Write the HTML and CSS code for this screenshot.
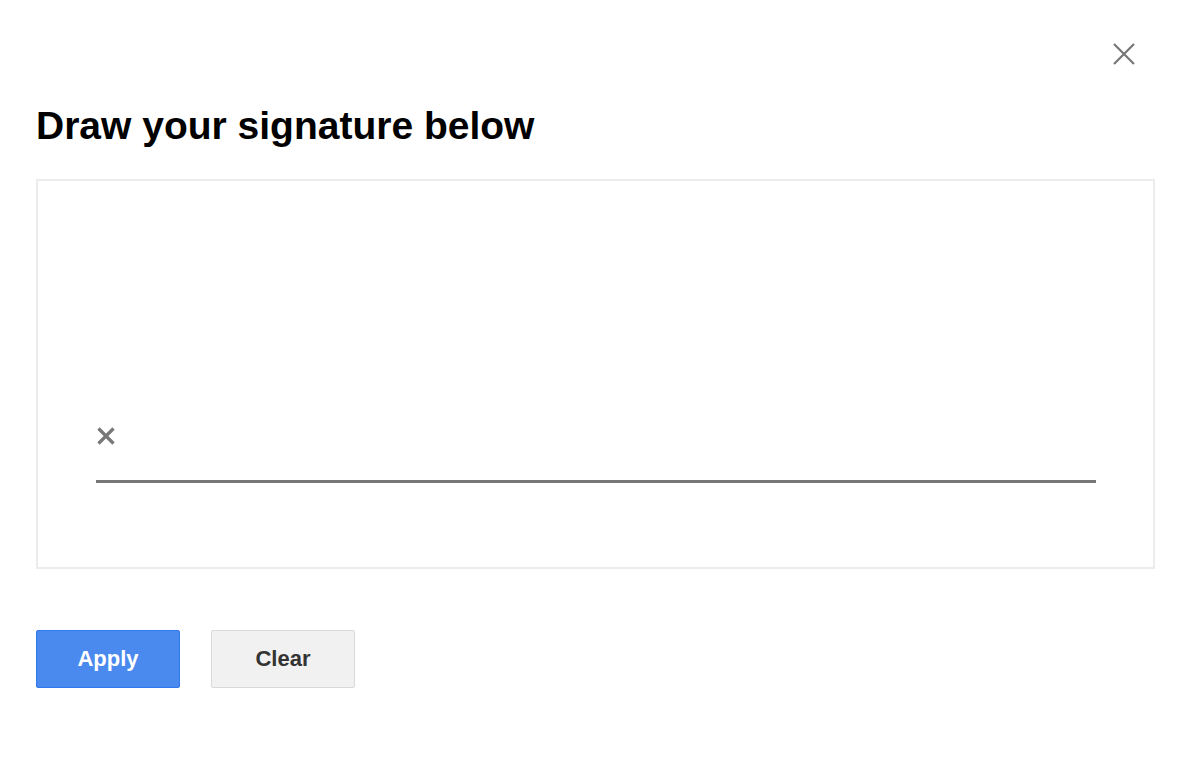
FILE: index.html
```html
<!DOCTYPE html>
<html>
<head>
<meta charset="utf-8">
<link rel="stylesheet" href="styles.css">
</head>
<body>
<div class="dialog">
  <div class="top">
    <button class="close" aria-label="Close">
      <svg width="24" height="24" viewBox="0 0 24 24"><path d="M2 2 L22 22 M22 2 L2 22" stroke="#777" stroke-width="2.2" fill="none"/></svg>
    </button>
  </div>
  <h1 class="title">Draw your signature below</h1>
  <div class="pad">
    <svg class="mark" width="20" height="20" viewBox="0 0 20 20"><path d="M2.5 2.5 L17.5 17.5 M17.5 2.5 L2.5 17.5" stroke="#777" stroke-width="3.2" fill="none"/></svg>
    <div class="line"></div>
  </div>
  <div class="actions">
    <button class="btn apply">Apply</button>
    <button class="btn clear">Clear</button>
  </div>
</div>
</body>
</html>
```

FILE: styles.css
```css
* { box-sizing: border-box; }
html, body { margin: 0; padding: 0; background: #fff; }
body { font-family: "Liberation Sans", Arial, sans-serif; }
.dialog {
  width: 1198px;
  height: 770px;
  padding: 42px 43px 0 36px;
  display: flex;
  flex-direction: column;
}
.top {
  display: flex;
  justify-content: flex-end;
  height: 24px;
  margin-right: 19px;
}
.close {
  border: 0;
  background: none;
  padding: 0;
  width: 24px;
  height: 24px;
  cursor: pointer;
}
.close svg { display: block; }
.title {
  margin: 40px 0 0 0;
  font-size: 39px;
  line-height: 39px;
  font-weight: bold;
  color: #000;
}
.pad {
  margin-top: 34px;
  height: 390px;
  border: 2px solid #ececec;
  padding: 245px 0 0 58px;
  display: flex;
  flex-direction: column;
}
.mark { display: block; margin-left: 0; }
.line {
  margin-top: 34px;
  width: 1000px;
  height: 3px;
  background: #777;
}
.actions {
  margin-top: 61px;
  display: flex;
  gap: 31px;
}
.btn {
  width: 144px;
  height: 58px;
  border-radius: 2px;
  font-family: "Liberation Sans", Arial, sans-serif;
  font-size: 22px;
  font-weight: bold;
  cursor: pointer;
}
.apply {
  background: #4a89ee;
  border: 1px solid #3079ed;
  color: #fff;
}
.clear {
  background: #f1f1f1;
  border: 1px solid #d9d9d9;
  color: #333;
}
```
